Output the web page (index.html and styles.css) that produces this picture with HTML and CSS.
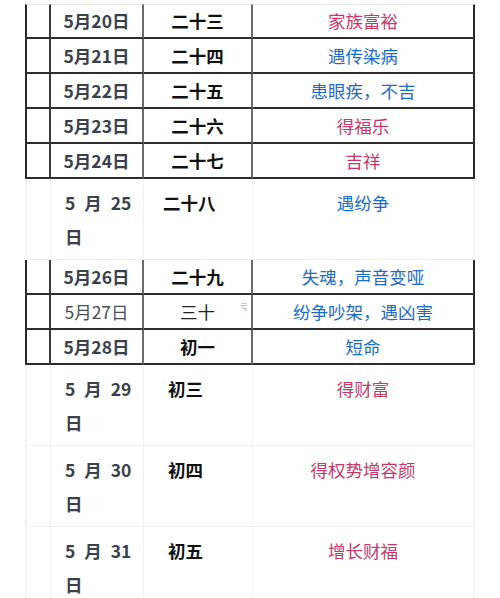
FILE: index.html
```html
<!DOCTYPE html>
<html>
<head>
<meta charset="utf-8">
<link rel="stylesheet" href="styles.css">
</head>
<body>
<table class="cal">
  <colgroup><col class="c1"><col class="c2"><col class="c3"><col class="c4"></colgroup>
  <tr class="dark first"><td></td><td class="date">5月20日</td><td class="lunar">二十三</td><td class="good">家族富裕</td></tr>
  <tr class="dark"><td></td><td class="date">5月21日</td><td class="lunar">二十四</td><td class="bad">遇传染病</td></tr>
  <tr class="dark"><td></td><td class="date">5月22日</td><td class="lunar">二十五</td><td class="bad">患眼疾，不吉</td></tr>
  <tr class="dark"><td></td><td class="date">5月23日</td><td class="lunar">二十六</td><td class="good">得福乐</td></tr>
  <tr class="dark"><td></td><td class="date">5月24日</td><td class="lunar">二十七</td><td class="good">吉祥</td></tr>
  <tr class="light"><td></td><td class="date"><span class="sp">5 月 25</span><br>日</td><td class="lunar l1">二十八</td><td class="bad">遇纷争</td></tr>
  <tr class="dark"><td></td><td class="date">5月26日</td><td class="lunar">二十九</td><td class="bad">失魂，声音变哑</td></tr>
  <tr class="dark plain"><td></td><td class="date">5月27日</td><td class="lunar">三十<span class="mark">亏</span></td><td class="bad">纷争吵架，遇凶害</td></tr>
  <tr class="dark"><td></td><td class="date">5月28日</td><td class="lunar">初一</td><td class="bad">短命</td></tr>
  <tr class="light"><td></td><td class="date"><span class="sp">5 月 29</span><br>日</td><td class="lunar l2">初三</td><td class="good">得财富</td></tr>
  <tr class="light"><td></td><td class="date"><span class="sp">5 月 30</span><br>日</td><td class="lunar l2">初四</td><td class="good">得权势增容颜</td></tr>
  <tr class="light"><td></td><td class="date"><span class="sp">5 月 31</span><br>日</td><td class="lunar l2">初五</td><td class="good">增长财福</td></tr>
</table>
</body>
</html>
```
FILE: styles.css
```css
html, body {
  margin: 0;
  padding: 0;
  background: #ffffff;
}
body {
  font-family: "Noto Sans CJK SC", "Noto Sans", sans-serif;
  font-size: 17.5px;
  overflow: hidden;
}
.cal {
  margin: 4px 0 0 25px;
  border-collapse: separate;
  border-spacing: 0;
  table-layout: fixed;
  width: 450px;
}
.c1 { width: 26px; }
.c2 { width: 93px; }
.c3 { width: 109px; }
.c4 { width: 222px; }

.cal td {
  padding: 0;
  text-align: center;
  vertical-align: top;
}
.dark td {
  line-height: 33px;
  height: 33px;
  border-bottom: 2px solid #2e2e2e;
  border-right: 2px solid #6a6a6a;
}
.dark td:first-child {
  border-left: 2px solid #2a2a2a;
  border-right-color: #3a3a3a;
}
.dark td:last-child { border-right-color: #2a2a2a; }
.first td { border-top: 1px solid #e6e6e6; line-height: 32px; height: 32px; }

.light td {
  line-height: 34px;
  padding: 7px 0 5px;
  border-bottom: 1px solid #f1f1f1;
  border-right: 1px solid #f1f1f1;
}
.light td:first-child { border-left: 2px solid #f3f3f3; }
.light td:last-child { border-right: 2px solid #f3f3f3; }
.light td.date {
  text-align: left;
  padding-left: 14px;
}
.sp { word-spacing: 5px; }
.light td.l1 { text-align: left; padding-left: 19px; }
.light td.l2 { text-align: left; padding-left: 24px; }

.date { color: #3a414b; font-weight: 700; }
.lunar { color: #111111; font-weight: 700; position: relative; }
.good { color: #c23a6c; }
.bad { color: #1d6cc2; }

.plain .date { font-weight: 400; color: #4a4f57; }
.plain .lunar { font-weight: 400; color: #222222; }
.mark {
  position: absolute;
  right: 3px;
  top: 5px;
  line-height: 14px;
  font-size: 8px;
  color: #a0a0a0;
  font-weight: 400;
}
```
